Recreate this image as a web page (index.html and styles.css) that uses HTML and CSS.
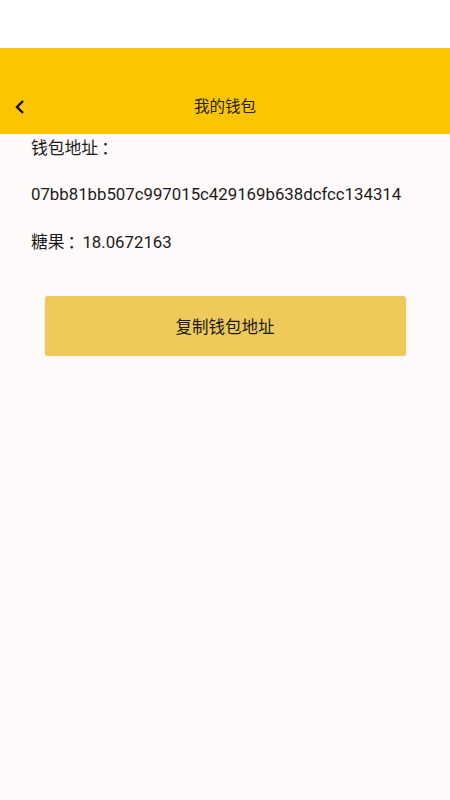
FILE: index.html
```html
<!DOCTYPE html>
<html lang="zh-CN">
<head>
    <meta charset="UTF-8">
    <meta name="viewport" content="width=device-width, initial-scale=1.0">
    <title>我的钱包</title>
    <link rel="stylesheet" href="styles.css">
</head>
<body>
    <div class="status-bar"></div>
    <header class="top-bar">
        <a class="back" href="#">
            <svg width="12" height="16" viewBox="0 0 12 16">
                <path d="M9 2 L3 8 L9 14" fill="none" stroke="#111" stroke-width="2.4"/>
            </svg>
        </a>
        <h1>我的钱包</h1>
    </header>

    <section class="wallet">
        <p class="line">钱包地址<span class="colon">：</span></p>
        <p class="line">07bb81bb507c997015c429169b638dcfcc134314</p>
        <p class="line">糖果<span class="colon">：</span>18.0672163</p>
        <button class="copy-btn">复制钱包地址</button>
    </section>
</body>
</html>
```

FILE: styles.css
```css
body {
    margin: 0;
    padding: 0;
    background-color: #fffbfb;
    font-family: Roboto, "Noto Sans CJK SC", sans-serif;
    color: #1a1a1a;
}
.status-bar {
    height: 48px;
    background-color: #ffffff;
}
.top-bar {
    height: 86px;
    background-color: #fcc502;
    position: relative;
    display: flex;
    align-items: flex-end;
    justify-content: center;
}
.top-bar h1 {
    margin: 0;
    height: 54px;
    line-height: 54px;
    font-size: 15.5px;
    font-weight: normal;
    color: #222;
}
.back {
    position: absolute;
    left: 14px;
    bottom: 19px;
    display: block;
    width: 12px;
    height: 16px;
}
.back svg {
    display: block;
}
.wallet {
    padding: 0 31px;
}
.line {
    margin: 0;
    height: 47px;
    line-height: 26px;
    font-size: 16.8px;
}
.colon {
    font-family: "Noto Sans CJK JP", sans-serif;
    padding-left: 3px;
    margin-right: -2px;
}
.copy-btn {
    display: block;
    margin: 21px auto 0;
    width: 361px;
    height: 60px;
    background-color: #efca5a;
    border: none;
    border-radius: 3px;
    box-shadow: 0 1px 2px rgba(0, 0, 0, 0.12);
    font-family: Roboto, "Noto Sans CJK SC", sans-serif;
    font-size: 16.5px;
    color: #1a1a1a;
    cursor: pointer;
}
```
